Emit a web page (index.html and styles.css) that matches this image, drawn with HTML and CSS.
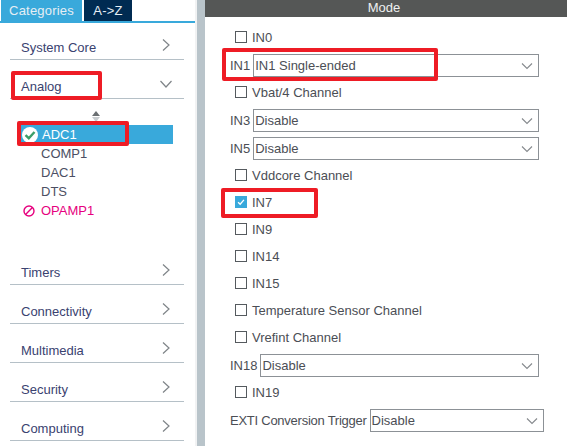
FILE: index.html
```html
<!DOCTYPE html>
<html lang="en">
<head>
    <meta charset="UTF-8">
    <meta name="viewport" content="width=device-width, initial-scale=1.0">
    <title>ADC1 Mode</title>
    <link rel="stylesheet" href="styles.css">
</head>
<body>
    <div class="app">
        <aside class="sidebar">
            <div class="tabs">
                <div class="tab tab-active">Categories</div>
                <div class="tab tab-dark">A-&gt;Z</div>
            </div>

            <div class="group">
                <span>System Core</span>
                <svg class="arrow" viewBox="0 0 10 14"><path d="M2 1.5 L8 7 L2 12.5"/></svg>
            </div>
            <div class="group">
                <span>Analog</span>
                <svg class="arrow arrow-down" viewBox="0 0 14 10"><path d="M1.5 2 L7 8 L12.5 2"/></svg>
            </div>

            <div class="tree">
                <svg class="scroll-arrows" viewBox="0 0 8 11">
                    <path class="up" d="M4 0 L8 5 L0 5 Z"/>
                    <path class="down" d="M0 6 L8 6 L4 11 Z"/>
                </svg>
                <div class="tree-item selected">
                    <svg class="tree-icon" viewBox="0 0 16 16">
                        <circle cx="8" cy="8" r="8" fill="#fff"/>
                        <path d="M3.5 8.2 L6.8 11.2 L12.5 5" fill="none" stroke="#3c9f6a" stroke-width="2.4"/>
                    </svg>
                    <span>ADC1</span>
                </div>
                <div class="tree-item">COMP1</div>
                <div class="tree-item">DAC1</div>
                <div class="tree-item">DTS</div>
                <div class="tree-item disabled">
                    <svg class="tree-icon" viewBox="0 0 12 12">
                        <circle cx="6" cy="6" r="5" fill="none" stroke="#e6007e" stroke-width="1.4"/>
                        <path d="M2.6 9.4 L9.4 2.6" stroke="#e6007e" stroke-width="1.4"/>
                    </svg>
                    <span>OPAMP1</span>
                </div>
            </div>

            <div class="group">
                <span>Timers</span>
                <svg class="arrow" viewBox="0 0 10 14"><path d="M2 1.5 L8 7 L2 12.5"/></svg>
            </div>
            <div class="group">
                <span>Connectivity</span>
                <svg class="arrow" viewBox="0 0 10 14"><path d="M2 1.5 L8 7 L2 12.5"/></svg>
            </div>
            <div class="group">
                <span>Multimedia</span>
                <svg class="arrow" viewBox="0 0 10 14"><path d="M2 1.5 L8 7 L2 12.5"/></svg>
            </div>
            <div class="group">
                <span>Security</span>
                <svg class="arrow" viewBox="0 0 10 14"><path d="M2 1.5 L8 7 L2 12.5"/></svg>
            </div>
            <div class="group">
                <span>Computing</span>
                <svg class="arrow" viewBox="0 0 10 14"><path d="M2 1.5 L8 7 L2 12.5"/></svg>
            </div>
        </aside>

        <div class="splitter"></div>

        <main class="mode">
            <div class="mode-title">Mode</div>
            <div class="mode-form">
                <label class="check"><span class="box"></span>IN0</label>
                <div class="field"><span>IN1</span><div class="select select-main">IN1 Single-ended<svg class="chevron" viewBox="0 0 12 8"><path d="M1 1.5 L6 6.5 L11 1.5"/></svg></div></div>
                <label class="check"><span class="box"></span>Vbat/4 Channel</label>
                <div class="field"><span>IN3</span><div class="select select-main">Disable<svg class="chevron" viewBox="0 0 12 8"><path d="M1 1.5 L6 6.5 L11 1.5"/></svg></div></div>
                <div class="field"><span>IN5</span><div class="select select-main">Disable<svg class="chevron" viewBox="0 0 12 8"><path d="M1 1.5 L6 6.5 L11 1.5"/></svg></div></div>
                <label class="check"><span class="box"></span>Vddcore Channel</label>
                <label class="check">
                    <span class="box box-on"><svg viewBox="0 0 12 12"><path d="M2.5 6.2 L5 8.7 L9.5 3.5"/></svg></span>IN7
                </label>
                <label class="check"><span class="box"></span>IN9</label>
                <label class="check"><span class="box"></span>IN14</label>
                <label class="check"><span class="box"></span>IN15</label>
                <label class="check"><span class="box"></span>Temperature Sensor Channel</label>
                <label class="check"><span class="box"></span>Vrefint Channel</label>
                <div class="field"><span>IN18</span><div class="select select-main">Disable<svg class="chevron" viewBox="0 0 12 8"><path d="M1 1.5 L6 6.5 L11 1.5"/></svg></div></div>
                <label class="check"><span class="box"></span>IN19</label>
                <div class="field field-exti"><span>EXTI Conversion Trigger</span><div class="select select-exti">Disable<svg class="chevron" viewBox="0 0 12 8"><path d="M1 1.5 L6 6.5 L11 1.5"/></svg></div></div>
            </div>
        </main>

        <!-- red annotation boxes drawn on top of the screenshot -->
        <div class="mark mark-analog"></div>
        <div class="mark mark-adc"></div>
        <div class="mark mark-in1"></div>
        <div class="mark mark-in7"></div>
    </div>
</body>
</html>
```

FILE: styles.css
```css
* {
    margin: 0;
    padding: 0;
    box-sizing: border-box;
}

body {
    font-family: 'Liberation Sans', Arial, sans-serif;
    background-color: #ffffff;
    width: 567px;
    height: 446px;
    overflow: hidden;
}

.app {
    position: relative;
    display: flex;
    height: 446px;
}

/* left column */
.sidebar {
    width: 195px;
    flex-shrink: 0;
    font-size: 13px;
    color: #3a4270;
}

.tabs {
    display: flex;
    height: 23px;
    padding-left: 1px;
    gap: 2px;
    border-bottom: 2px solid #39a9db;
}

.tab {
    display: flex;
    align-items: center;
    justify-content: center;
    color: #e6eef4;
    font-size: 13px;
    letter-spacing: 0.2px;
}

.tab-active {
    width: 81px;
    background-color: #39a9db;
}

.tab-dark {
    width: 48px;
    background-color: #002b52;
}

.group {
    display: flex;
    justify-content: space-between;
    align-items: center;
    height: 39px;
    margin: 0 11px 0 10px;
    padding: 15px 13px 0 11px;
    border-bottom: 1px solid #b5c0c7;
}

.group:nth-child(2) {
    height: 37px;
    padding-top: 13px;
}

.arrow {
    width: 10px;
    height: 14px;
    margin-bottom: 5px;
    fill: none;
    stroke: #7f8488;
    stroke-width: 1.2;
}

.arrow-down {
    width: 14px;
    height: 10px;
    margin-right: -2px;
}

.tree {
    height: 147px;
    padding: 12px 0 0 21px;
}

.scroll-arrows {
    display: block;
    width: 8px;
    height: 11px;
    margin: 0 0 3px 71px;
}

.scroll-arrows .up {
    fill: #6b6f72;
}

.scroll-arrows .down {
    fill: #c9cdd0;
}

.tree-item {
    display: flex;
    align-items: center;
    height: 19px;
    width: 152px;
    padding-left: 20px;
    color: #4c4f63;
}

.tree-item.selected {
    padding-left: 1px;
    background-color: #39a9db;
    color: #ffffff;
}

.tree-item.selected .tree-icon {
    width: 16px;
    height: 16px;
    margin-right: 4px;
}

.tree-item.disabled {
    padding-left: 2px;
    color: #e6007e;
}

.tree-item.disabled .tree-icon {
    width: 12px;
    height: 12px;
    margin-right: 6px;
}

.splitter {
    width: 10px;
    flex-shrink: 0;
    background-color: #b9c4ca;
    border-left: 2px solid #f1f2f3;
}

/* right column */
.mode {
    flex: 1;
    font-size: 13px;
    color: #4b4e55;
}

.mode-title {
    height: 17px;
    line-height: 15px;
    text-align: center;
    background-color: #555756;
    color: #eef0f0;
    font-size: 13px;
    padding-right: 4px;
}

.mode-form {
    display: flex;
    flex-direction: column;
    padding: 6px 0 0 25px;
}

.check {
    display: flex;
    align-items: center;
    height: 27px;
    padding: 1px 0 0 5px;
    gap: 5px;
}

.box {
    width: 12px;
    height: 12px;
    border: 1px solid #555a5e;
    background-color: #ffffff;
}

.box svg {
    display: block;
    width: 10px;
    height: 10px;
    fill: none;
    stroke: #ffffff;
    stroke-width: 1.6;
}

.box-on {
    background-color: #39a9db;
    border-color: #39a9db;
}

.field {
    display: flex;
    align-items: center;
    height: 23px;
    margin: 4px 0 1px;
    gap: 3px;
}

.field-exti {
    letter-spacing: -0.25px;
}

.select {
    position: relative;
    display: flex;
    align-items: center;
    height: 23px;
    padding-left: 1px;
    border: 1px solid #8c9196;
    background-color: #ffffff;
    letter-spacing: 0;
}

.select-main {
    flex: 1;
    margin-right: 28px;
}

.select-exti {
    flex: 1;
    margin-right: 23px;
}

.chevron {
    position: absolute;
    right: 5px;
    top: 7px;
    width: 12px;
    height: 8px;
    fill: none;
    stroke: #85898d;
    stroke-width: 1.1;
}

.mark {
    position: absolute;
    border: 4px solid #ee1c25;
    border-radius: 2px;
}

.mark-analog {
    left: 11px;
    top: 71px;
    width: 91px;
    height: 29px;
}

.mark-adc {
    left: 17px;
    top: 121px;
    width: 112px;
    height: 25px;
}

.mark-in1 {
    left: 222px;
    top: 48px;
    width: 216px;
    height: 33px;
}

.mark-in7 {
    left: 221px;
    top: 188px;
    width: 97px;
    height: 30px;
}
```
